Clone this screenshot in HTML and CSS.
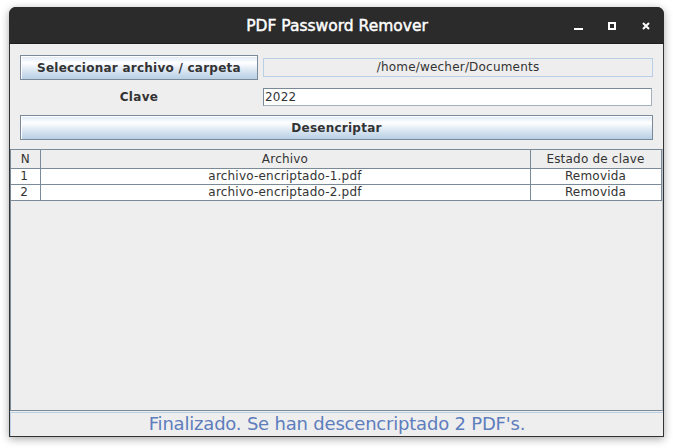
FILE: index.html
```html
<!DOCTYPE html>
<html lang="es">
<head>
<meta charset="utf-8">
<title>PDF Password Remover</title>
<link rel="stylesheet" href="styles.css">
</head>
<body>
<div class="desk">
  <div class="window">
    <div class="titlebar">
      <span class="title">PDF Password Remover</span>
      <div class="controls">
        <span class="ctl min"></span>
        <span class="ctl max"></span>
        <span class="ctl close">
          <svg width="8" height="8" viewBox="0 0 8 8"><path d="M1 1 L7 7 M7 1 L1 7" stroke="#fff" stroke-width="2" fill="none"/></svg>
        </span>
      </div>
    </div>
    <div class="content">
      <div class="form">
        <button class="mbtn">Seleccionar archivo / carpeta</button>
        <div class="pathfield">/home/wecher/Documents</div>
        <div class="label">Clave</div>
        <div class="pwfield">2022</div>
        <button class="mbtn wide">Desencriptar</button>
      </div>
      <div class="scroll">
        <table class="grid">
          <colgroup>
            <col class="c-n"><col class="c-file"><col class="c-state">
          </colgroup>
          <thead>
            <tr><th>N</th><th>Archivo</th><th>Estado de clave</th></tr>
          </thead>
          <tbody>
            <tr><td class="num">1</td><td>archivo-encriptado-1.pdf</td><td>Removida</td></tr>
            <tr><td class="num">2</td><td>archivo-encriptado-2.pdf</td><td>Removida</td></tr>
          </tbody>
        </table>
      </div>
      <div class="status">Finalizado. Se han descencriptado 2 PDF's.</div>
    </div>
  </div>
</div>
</body>
</html>
```
FILE: styles.css
```css
html, body {
  margin: 0;
  padding: 0;
  background: #ffffff;
}
.desk {
  width: 673px;
  height: 448px;
  padding: 7px 9px 0 9px;
  box-sizing: border-box;
}
.window {
  width: 655px;
  height: 430px;
  display: flex;
  flex-direction: column;
  border-radius: 7px 7px 0 0;
  box-shadow: 0 2px 9px rgba(0, 0, 0, 0.35);
  background: #2b2b2b;
}
.titlebar {
  height: 37px;
  flex: none;
  position: relative;
  display: flex;
  align-items: center;
  justify-content: center;
  background: #2b2b2b;
  border-radius: 7px 7px 0 0;
  border-bottom: 1px solid #1e1e1e;
  box-sizing: border-box;
}
.title {
  color: #ffffff;
  font-family: "DejaVu Sans", sans-serif;
  font-weight: normal;
  font-size: 15.5px;
  -webkit-text-stroke: 0.45px #ffffff;
  margin-top: 2px;
  margin-left: 1px;
}
.controls {
  position: absolute;
  right: 14px;
  top: 15px;
  display: flex;
  align-items: flex-start;
}
.ctl {
  display: block;
  box-sizing: border-box;
}
.min {
  width: 9px;
  height: 2px;
  background: #ffffff;
  margin-top: 6px;
  margin-right: 25px;
}
.max {
  width: 8px;
  height: 8px;
  border: 2px solid #ffffff;
  margin-right: 26px;
}
.close {
  width: 8px;
  height: 8px;
}
.close svg {
  display: block;
}
.content {
  flex: 1;
  display: flex;
  flex-direction: column;
  background: #eeeeee;
  border: 1px solid #333333;
  border-top: none;
  font-family: "DejaVu Sans", sans-serif;
  color: #333333;
  font-size: 12px;
  letter-spacing: 0.2px;
}
.form {
  display: grid;
  grid-template-columns: 238px 390px;
  grid-template-rows: 25px 18px 25px;
  column-gap: 5px;
  row-gap: 8px;
  padding: 11px 10px 10px 10px;
}
.mbtn {
  font-family: "DejaVu Sans", sans-serif;
  font-weight: bold;
  font-size: 12px;
  letter-spacing: 0.25px;
  color: #333333;
  border: 1px solid #7a8a99;
  box-shadow: inset 1px 1px 0 #ffffff;
  background: linear-gradient(to bottom, #dde8f3 0%, #ffffff 30%, #dde8f3 60%, #b8cfe5 100%);
  padding: 0;
  margin: 0;
  height: 25px;
}
.mbtn.wide {
  grid-column: 1 / 3;
  margin-top: 1px;
}
.pathfield {
  align-self: center;
  height: 19px;
  box-sizing: border-box;
  border: 1px solid #b8cfe5;
  background: #eeeeee;
  text-align: center;
  line-height: 17px;
  color: #333333;
}
.label {
  text-align: center;
  font-weight: bold;
  letter-spacing: 0.3px;
  line-height: 19px;
}
.pwfield {
  height: 18px;
  width: 389px;
  box-sizing: border-box;
  border: 1px solid #a3b0bd;
  border-top-color: #7a8a99;
  border-left-color: #7a8a99;
  background: #ffffff;
  line-height: 17px;
  padding-left: 1px;
  color: #333333;
}
.scroll {
  flex: 1;
  border: 1px solid #7a8a99;
  border-right-color: #b8c2cc;
  background: #eeeeee;
}
.grid {
  border-collapse: collapse;
  width: 650px;
  table-layout: fixed;
  font-size: 12px;
  color: #333333;
}
.c-n { width: 29px; }
.c-file { width: 490px; }
.c-state { width: 131px; }
.grid th {
  height: 18px;
  padding: 0;
  font-weight: normal;
  background: #eeeeee;
  border-right: 1px solid #7a8a99;
  border-bottom: 1px solid #7a8a99;
  text-align: center;
  line-height: 18px;
}
.grid td {
  height: 15px;
  padding: 0;
  background: #ffffff;
  border-right: 1px solid #7a8a99;
  border-bottom: 1px solid #7a8a99;
  text-align: center;
  line-height: 15px;
}
.grid td.num {
  padding-right: 2px;
}
.status {
  height: 24px;
  flex: none;
  box-sizing: border-box;
  border-top: 1px solid #b8cfe5;
  border-left: 1px solid #b8cfe5;
  margin-top: 1px;
  text-align: center;
  color: #5d7dbd;
  font-size: 18px;
  letter-spacing: -0.2px;
  line-height: 22px;
}
```
